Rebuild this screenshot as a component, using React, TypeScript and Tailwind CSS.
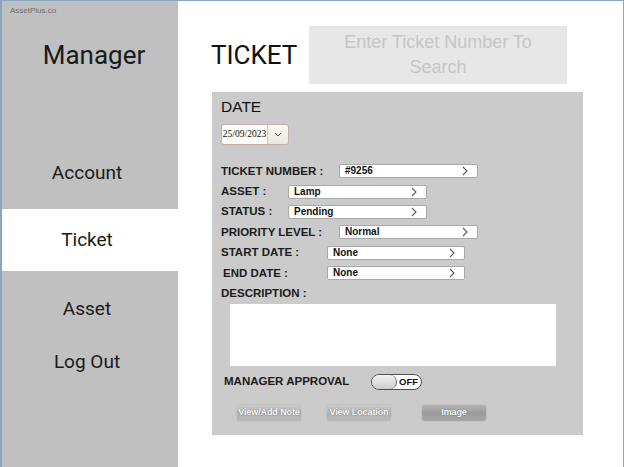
import React from "react";

const Chevron = () => (
  <svg width="6" height="10" viewBox="0 0 6 10" className="shrink-0">
    <polyline points="1,1 5,5 1,9" fill="none" stroke="#5a5a5a" strokeWidth="1.1" />
  </svg>
);

type RowProps = { label: string; labelW: number; boxW: number; value: string; ml?: boolean };

const rows: RowProps[] = [
  { label: "TICKET NUMBER :", labelW: 118, boxW: 139, value: "#9256" },
  { label: "ASSET :", labelW: 67, boxW: 139, value: "Lamp" },
  { label: "STATUS :", labelW: 67, boxW: 139, value: "Pending" },
  { label: "PRIORITY LEVEL :", labelW: 118, boxW: 139, value: "Normal" },
  { label: "START DATE :", labelW: 106, boxW: 138, value: "None" },
  { label: "END DATE :", labelW: 104, boxW: 138, value: "None", ml: true },
];

function Row({ label, labelW, boxW, value, ml }: RowProps) {
  return (
    <div className={"h-[20.4px] flex items-center " + (ml ? "ml-[2px]" : "")}>
      <div
        className="text-[11.5px] font-bold text-[#1b1b1b] whitespace-nowrap shrink-0"
        style={{ width: labelW }}
      >
        {label}
      </div>
      <div
        className="h-[14px] bg-white border border-[#a9a9a9] rounded-[2px] flex items-center justify-between pl-[5px] pr-[9px]"
        style={{ width: boxW }}
      >
        <span className="text-[10px] font-bold text-[#111] leading-none">{value}</span>
        <Chevron />
      </div>
    </div>
  );
}

function Btn({ label, dark, w }: { label: string; dark?: boolean; w: number }) {
  return (
    <div
      className={
        "h-[16px] rounded-[3px] flex items-center justify-center whitespace-nowrap text-[9px] tracking-[-0.1px] font-bold text-white shadow-[0_0_1px_rgba(0,0,0,0.35)] [text-shadow:0_0_1px_rgba(0,0,0,0.55)] " +
        (dark
          ? "bg-gradient-to-b from-[#b4b4b4] via-[#9a9a9a] to-[#a6a6a6]"
          : "bg-gradient-to-b from-[#cdcdcd] via-[#b1b1b1] to-[#bbbbbb]")
      }
      style={{ width: w }}
    >
      {label}
    </div>
  );
}

export default function App() {
  return (
    <div className="w-[624px] h-[467px] bg-white border-t border-l-2 border-r border-[#87a7c7] flex overflow-hidden font-[family-name:'Liberation_Sans',Arial,sans-serif]">
      {/* Sidebar */}
      <div className="w-[176px] h-full bg-[#c0c0c0] flex flex-col shrink-0 text-[#1a1a1a]">
        <div className="pt-[5px] pl-[8px] text-[8px] leading-[10px] text-[#6b6b6b]">AssetPlus.co</div>
        <div className="mt-[24px] pl-[8px] text-center text-[26px] leading-[30px] font-[family-name:Roboto,sans-serif]">
          Manager
        </div>
        <div className="mt-[91px] pr-[6px] text-center text-[19px] leading-[24px] font-[family-name:Roboto,sans-serif]">
          Account
        </div>
        <div className="mt-[24px] h-[62px] bg-white flex items-center justify-center pr-[6px] text-[19px] font-[family-name:Roboto,sans-serif]">
          Ticket
        </div>
        <div className="mt-[26px] pr-[6px] text-center text-[19px] leading-[24px] font-[family-name:Roboto,sans-serif]">
          Asset
        </div>
        <div className="mt-[29px] pr-[6px] text-center text-[19px] leading-[24px] font-[family-name:Roboto,sans-serif]">
          Log Out
        </div>
      </div>

      {/* Main */}
      <div className="flex-1 flex flex-col">
        <div className="pt-[25px] pl-[33px] flex items-center">
          <div className="w-[98px] text-[26px] leading-none text-[#111] font-[family-name:Roboto,sans-serif]">TICKET</div>
          <div className="w-[258px] h-[58px] bg-[#e7e7e7] flex items-center justify-center text-center text-[18px] leading-[25px] text-[#c6c6c6]">
            Enter Ticket Number To
            <br />
            Search
          </div>
        </div>

        <div className="mt-[8px] ml-[34px] w-[371px] h-[343px] bg-[#cbcbcb] pl-[9px] pt-[6px] flex flex-col">
          <div className="text-[15.5px] leading-[18px] text-[#111]">DATE</div>
          <div className="mt-[8px] w-[68px] h-[21px] flex border border-[#bdb6a6] rounded-[3px] overflow-hidden">
            <div className="w-[45px] bg-[#fffdf7] flex items-center justify-center text-[9.5px] text-[#111] font-[family-name:'Liberation_Serif',serif]">
              25/09/2023
            </div>
            <div className="flex-1 border-l border-[#cdc7b8] bg-gradient-to-b from-[#fbfaf6] to-[#e9e7e0] flex items-center justify-center">
              <svg width="8" height="5" viewBox="0 0 8 5">
                <polyline points="1,1 4,4 7,1" fill="none" stroke="#555" strokeWidth="1" />
              </svg>
            </div>
          </div>

          <div className="mt-[16px] flex flex-col">
            {rows.map((r) => (
              <Row key={r.label} {...r} />
            ))}
            <div className="h-[20.4px] flex items-center text-[11.5px] font-bold text-[#1b1b1b]">DESCRIPTION :</div>
          </div>

          <div className="ml-[9px] w-[326px] h-[62px] bg-white" />

          <div className="mt-[8px] ml-[3px] h-[16px] flex items-center">
            <div className="w-[147px] text-[11.5px] font-bold text-[#1b1b1b] whitespace-nowrap">MANAGER APPROVAL</div>
            <div className="w-[51px] h-[16px] rounded-full border border-[#4f4f4f] bg-white flex overflow-hidden">
              <div className="w-[25px] h-full rounded-full border-r border-[#6a6a6a] bg-gradient-to-b from-[#f3f3f3] to-[#cdcdcd]" />
              <div className="flex-1 flex items-center justify-center text-[9.5px] font-bold text-[#111] pr-[1px]">OFF</div>
            </div>
          </div>

          <div className="mt-[15px] ml-[16px] flex">
            <Btn label="View/Add Note" w={64} />
            <div className="ml-[26px]">
              <Btn label="View Location" w={64} />
            </div>
            <div className="ml-[31px]">
              <Btn label="Image" w={64} dark />
            </div>
          </div>
        </div>
      </div>
    </div>
  );
}
